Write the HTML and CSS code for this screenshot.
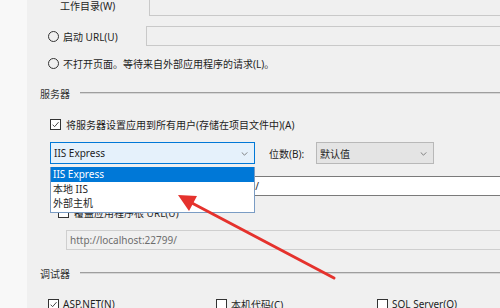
FILE: index.html
```html
<!DOCTYPE html>
<html>
<head>
<meta charset="utf-8">
<link rel="stylesheet" href="styles.css">
</head>
<body>
<div class="page">
  <div class="strip"></div>
  <div class="main">
    <div class="row row-a">
      <span class="lbl-wd">工作目录(W)</span>
      <div class="input dis url-in"></div>
    </div>
    <div class="row row-b">
      <span class="radio"></span><span class="txt">启动 URL(U)</span>
      <div class="input dis url-in2"></div>
    </div>
    <div class="row row-c">
      <span class="radio"></span><span class="txt">不打开页面。等待来自外部应用程序的请求(L)。</span>
    </div>
    <div class="row group g-server">
      <span class="glabel">服务器</span><span class="gline"></span>
    </div>
    <div class="row row-chk">
      <span class="check on"><svg viewBox="0 0 10 10"><path d="M1.8 5.2 L4 7.4 L8.4 2.4" fill="none" stroke="#333" stroke-width="1"/></svg></span>
      <span class="txt">将服务器设置应用到所有用户(存储在项目文件中)(A)</span>
    </div>
    <div class="row row-combo">
      <div class="combo active"><span>IIS Express</span><svg class="chev" viewBox="0 0 8 5"><path d="M0.5 0.5 L4 4 L7.5 0.5" fill="none" stroke="#666" stroke-width="1"/></svg></div>
      <span class="bits">位数(B):</span>
      <div class="combo gray"><span>默认值</span><svg class="chev" viewBox="0 0 8 5"><path d="M0.5 0.5 L4 4 L7.5 0.5" fill="none" stroke="#666" stroke-width="1"/></svg></div>
    </div>
    <div class="row row-url">
      <div class="input white"><span>http://localhost:22799/</span></div>
    </div>
    <div class="row row-ovr">
      <span class="check"></span><span class="txt">覆盖应用程序根 URL(U)</span>
    </div>
    <div class="row row-dis">
      <div class="input dis2"><span>http://localhost:22799/</span></div>
    </div>
    <div class="row group g-debug">
      <span class="glabel">调试器</span><span class="gline"></span>
    </div>
    <div class="row row-dbg">
      <span class="check on"><svg viewBox="0 0 10 10"><path d="M1.8 5.2 L4 7.4 L8.4 2.4" fill="none" stroke="#333" stroke-width="1"/></svg></span><span class="txt w-asp">ASP.NET(N)</span>
      <span class="check"></span><span class="txt w-native">本机代码(C)</span>
      <span class="check"></span><span class="txt">SQL Server(O)</span>
    </div>
  </div>
  <div class="dropdown">
    <div class="opt sel">IIS Express</div>
    <div class="opt">本地 IIS</div>
    <div class="opt">外部主机</div>
  </div>
  <svg class="arrow" viewBox="0 0 500 308" width="500" height="308">
    <line x1="334" y1="278" x2="190" y2="202" stroke="#e5322d" stroke-width="3" stroke-linecap="round"/>
    <polygon points="178,195 197,196 189,211" fill="#e5322d"/>
  </svg>
</div>
</body>
</html>
```

FILE: styles.css
```css
html, body {
  margin: 0;
  padding: 0;
  width: 500px;
  height: 308px;
  overflow: hidden;
  background: #f0f0f0;
}
.page {
  position: relative;
  display: flex;
  width: 500px;
  height: 308px;
  overflow: hidden;
  font-family: "Noto Sans", "Noto Sans CJK SC", sans-serif;
  font-size: 10px;
  color: #1e1e1e;
}
.strip {
  width: 27px;
  flex: none;
  background: #f8f8f8;
}
.main {
  flex: 1;
  display: flex;
  flex-direction: column;
  background: #f0f0f0;
}
.row {
  display: flex;
  align-items: center;
  flex: none;
  white-space: nowrap;
}
.row-a { height: 20px; margin-top: -4px; }
.lbl-wd { margin-left: 33px; width: 89px; position: relative; top: -1px; }
.input {
  box-sizing: border-box;
  height: 100%;
  border: 1px solid #c9c9c9;
  display: flex;
  align-items: center;
}
.input.dis { background: #f0f0f0; }
.url-in { flex: 1; margin-right: -2px; }
.row-b { height: 20px; margin-top: 10px; }
.radio {
  box-sizing: border-box;
  width: 11px;
  height: 11px;
  border: 1px solid #333;
  border-radius: 50%;
  margin-left: 21px;
  flex: none;
}
.txt { margin-left: 4px; }
.row-b .txt { width: 83px; }
.url-in2 { flex: 1; margin-right: -2px; }
.row-c { height: 16px; margin-top: 9px; }
.group { height: 16px; }
.g-server { margin-top: 14px; }
.glabel { margin-left: 13px; width: 40px; color: #333; }
.gline {
  flex: 1;
  height: 0;
  border-top: 1px solid #9e9e9e;
  border-bottom: 1px solid #d6d6d6;
}
.row-chk { height: 16px; margin-top: 15px; }
.check {
  box-sizing: border-box;
  width: 11px;
  height: 11px;
  border: 1px solid #333;
  background: #fff;
  flex: none;
  display: flex;
}
.check svg { width: 9px; height: 9px; }
.row-chk .check { margin-left: 23px; }
.row-chk .txt { margin-left: 5px; }
.row-combo { height: 22px; margin-top: 10px; }
.combo {
  box-sizing: border-box;
  height: 22px;
  display: flex;
  align-items: center;
  padding-left: 3px;
  position: relative;
}
.combo.active {
  margin-left: 23px;
  width: 205px;
  background: #e5f1fb;
  border: 1px solid #0078d7;
}
.combo.gray {
  width: 118px;
  background: #e4e4e4;
  border: 1px solid #b8b8b8;
  padding-left: 3px;
}
.chev {
  position: absolute;
  right: 6px;
  top: 9px;
  width: 7px;
  height: 4px;
}
.bits { margin-left: 14px; width: 47px; }
.row-url { height: 20px; margin-top: 12px; padding-left: 122px; }
.input.white {
  flex: 1;
  background: #fff;
  border: 1px solid #7a7a7a;
  border-right: none;
  padding-left: 2px;
}
.row-ovr { height: 16px; margin-top: 8px; }
.row-ovr .check { margin-left: 31px; }
.row-ovr .txt { margin-left: 5px; }
.row-dis { height: 20px; margin-top: 10px; padding-left: 39px; }
.input.dis2 {
  flex: 1;
  background: #f0f0f0;
  border: 1px solid #cfcfcf;
  border-right: none;
  padding-left: 3px;
  color: #6d6d6d;
}
.g-debug { margin-top: 15px; }
.row-dbg { height: 16px; margin-top: 15px; }
.row-dbg .check { margin-left: 0; }
.row-dbg .check:first-child { margin-left: 21px; }
.w-asp { width: 153px; }
.w-native { width: 146px; }
.dropdown {
  position: absolute;
  left: 50px;
  top: 167px;
  width: 205px;
  box-sizing: border-box;
  border: 1px solid #7a9cc4;
  border-top: none;
  background: #fff;
  padding-bottom: 1px;
}
.opt {
  height: 14.5px;
  line-height: 14px;
  padding-left: 2px;
  color: #1e1e1e;
}
.opt.sel {
  background: #0078d7;
  color: #fff;
}
.arrow {
  position: absolute;
  left: 0;
  top: 0;
  pointer-events: none;
}
```
